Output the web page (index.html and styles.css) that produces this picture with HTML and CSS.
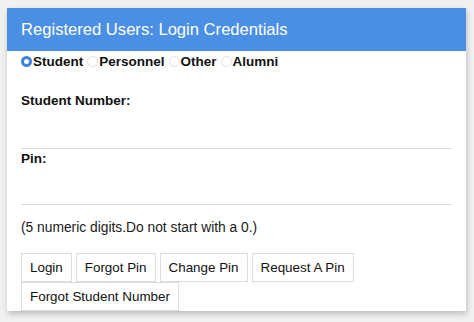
FILE: index.html
```html
<!DOCTYPE html>
<html>
<head>
<meta charset="utf-8">
<link rel="stylesheet" href="styles.css">
</head>
<body>
<div class="card">
  <div class="card-header">Registered Users: Login Credentials</div>
  <div class="card-body">
    <div class="radios">
      <label class="opt"><span class="radio checked"></span>Student</label>
      <label class="opt"><span class="radio"></span>Personnel</label>
      <label class="opt"><span class="radio"></span>Other</label>
      <label class="opt"><span class="radio"></span>Alumni</label>
    </div>
    <div class="label first">Student Number:</div>
    <div class="field f1"></div>
    <div class="label">Pin:</div>
    <div class="field f2"></div>
    <div class="hint">(5 numeric digits.Do not start with a 0.)</div>
    <div class="buttons">
      <span class="btn">Login</span>
      <span class="btn">Forgot Pin</span>
      <span class="btn">Change Pin</span>
      <span class="btn">Request A Pin</span>
      <span class="btn">Forgot Student Number</span>
    </div>
  </div>
</div>
</body>
</html>
```

FILE: styles.css
```css
html, body {
  margin: 0;
  padding: 0;
}
body {
  background: #f1f1f1;
  font-family: "Liberation Sans", Arial, Helvetica, sans-serif;
  color: #111;
  padding: 8px 7px;
  height: 322px;
  box-sizing: border-box;
}
.card {
  width: 459px;
  background: #fff;
  box-shadow: 1px 3px 6px rgba(0, 0, 0, 0.22);
}
.card-header {
  background: #4a8fe3;
  color: #fff;
  height: 43px;
  line-height: 43px;
  font-size: 16.6px;
  padding-left: 14px;
}
.card-body {
  padding: 0 14px;
}
.radios {
  height: 20px;
  display: flex;
  align-items: center;
  font-size: 13.5px;
  font-weight: bold;
}
.opt {
  display: flex;
  align-items: center;
  margin-right: 4px;
}
.radio {
  width: 11px;
  height: 11px;
  box-sizing: border-box;
  border-radius: 50%;
  border: 1px solid #e2e2e2;
  background: #fff;
  margin-right: 1px;
}
.radio.checked {
  border: 3px solid #3c82e6;
}
.label {
  font-size: 13.5px;
  font-weight: bold;
  line-height: 16px;
  margin-top: 2px;
}
.label.first {
  margin-top: 22px;
}
.field {
  border-bottom: 1px solid #dcdcdc;
}
.f1 {
  height: 39px;
}
.f2 {
  height: 37px;
}
.hint {
  font-size: 13.8px;
  line-height: 16px;
  margin-top: 15px;
  color: #1a1a1a;
}
.buttons {
  margin-top: 17px;
  display: flex;
  flex-wrap: wrap;
  column-gap: 4px;
}
.btn {
  box-sizing: border-box;
  height: 29px;
  line-height: 27px;
  border: 1px solid #dddddd;
  padding: 0 8px;
  font-size: 13.4px;
  color: #111;
  background: #fff;
}
```
